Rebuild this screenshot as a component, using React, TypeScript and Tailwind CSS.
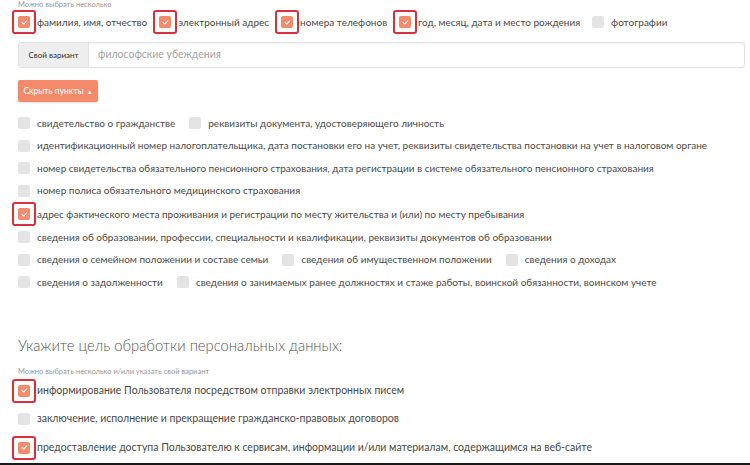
import React from "react";

const font = { fontFamily: '"Lato", "Liberation Sans", sans-serif' };

function Check({ checked = false, mark = false }: { checked?: boolean; mark?: boolean }) {
  return (
    <span className={`relative inline-flex shrink-0 items-center justify-center rounded-[2px] w-[12px] h-[12px] ${checked ? "bg-[#f38b6d]" : "bg-[#e4e4e4]"}`}>
      {checked && (
        <svg viewBox="0 0 10 10" className="w-[7px] h-[7px]">
          <path d="M1.8 5.2 L4 7.2 L8.2 2.6" fill="none" stroke="#fff" strokeWidth="1.6" strokeLinecap="round" strokeLinejoin="round" />
        </svg>
      )}
      {mark && <span className="absolute -inset-[6px] border-[2.5px] border-[#d8313d] rounded-[3px]" />}
    </span>
  );
}

function Item({ label, checked = false, mark = false }: { label: string; checked?: boolean; mark?: boolean }) {
  return (
    <span className="inline-flex items-center gap-[7px]">
      <Check checked={checked} mark={mark} />
      <span className="whitespace-nowrap">{label}</span>
    </span>
  );
}

const listRows: { label: string; checked?: boolean; mark?: boolean }[][] = [
  [{ label: "свидетельство о гражданстве" }, { label: "реквизиты документа, удостоверяющего личность" }],
  [{ label: "идентификационный номер налогоплательщика, дата постановки его на учет, реквизиты свидетельства постановки на учет в налоговом органе" }],
  [{ label: "номер свидетельства обязательного пенсионного страхования, дата регистрации в системе обязательного пенсионного страхования" }],
  [{ label: "номер полиса обязательного медицинского страхования" }],
  [{ label: "адрес фактического места проживания и регистрации по месту жительства и (или) по месту пребывания", checked: true, mark: true }],
  [{ label: "сведения об образовании, профессии, специальности и квалификации, реквизиты документов об образовании" }],
  [{ label: "сведения о семейном положении и составе семьи" }, { label: "сведения об имущественном положении" }, { label: "сведения о доходах" }],
  [{ label: "сведения о задолженности" }, { label: "сведения о занимаемых ранее должностях и стаже работы, воинской обязанности, воинском учете" }],
];

export default function App() {
  return (
    <div style={font} className="w-[750px] h-[465px] overflow-hidden bg-white border-b-2 border-[#1a1a1a] pl-[18px] pr-[5px] text-[#4a4a4a]">
      {/* personal data kinds */}
      <div className="h-[9px] text-[7.5px] leading-[9px] text-[#9a9a9a]">Можно выбрать несколько</div>
      <div className="h-[26px] flex items-center gap-[12px] text-[10px]">
        <Item label="фамилия, имя, отчество" checked mark />
        <Item label="электронный адрес" checked mark />
        <Item label="номера телефонов" checked mark />
        <Item label="год, месяц, дата и место рождения" checked mark />
        <Item label="фотографии" />
      </div>

      <div className="mt-[7px] h-[26px] flex border border-[#e2e2e2] rounded-[3px] shadow-[inset_0_1px_2px_rgba(0,0,0,0.06)] overflow-hidden">
        <div className="w-[70px] shrink-0 flex items-center justify-center bg-[#eeeeee] border-r border-[#e2e2e2] text-[8px] text-[#333]">Свой вариант</div>
        <div className="flex-1 flex items-center pl-[9px] text-[10.5px] text-[#a5a5a5]">философские убеждения</div>
      </div>

      <button className="mt-[12px] w-[80px] h-[22px] flex items-center justify-center gap-[3px] rounded-[2px] bg-[#f58a6b] text-white text-[8.5px] shadow-[0_1px_2px_rgba(0,0,0,0.12)]">
        Скрыть пункты
        <span className="text-[6px]">▲</span>
      </button>

      <div className="mt-[10px] flex flex-col text-[10px]">
        {listRows.map((row, i) => (
          <div key={i} className={`flex items-center gap-[14px] ${i === 4 ? "h-[24px]" : "h-[22.5px]"}`}>
            {row.map((it, j) => (
              <Item key={j} label={it.label} checked={it.checked} mark={it.mark} />
            ))}
          </div>
        ))}
      </div>

      {/* purpose */}
      <div className="mt-[41px] h-[22px] flex items-center text-[14.8px] font-light text-[#555]">Укажите цель обработки персональных данных:</div>
      <div className="mt-[10px] h-[10px] text-[7.5px] leading-[10px] text-[#9a9a9a]">Можно выбрать несколько и/или указать свой вариант</div>
      <div className="flex flex-col text-[10.5px]">
        <div className="h-[28px] flex items-center"><Item label="информирование Пользователя посредством отправки электронных писем" checked mark /></div>
        <div className="h-[29px] flex items-center"><Item label="заключение, исполнение и прекращение гражданско-правовых договоров" /></div>
        <div className="h-[28px] flex items-center"><Item label="предоставление доступа Пользователю к сервисам, информации и/или материалам, содержащимся на веб-сайте" checked mark /></div>
      </div>
    </div>
  );
}
